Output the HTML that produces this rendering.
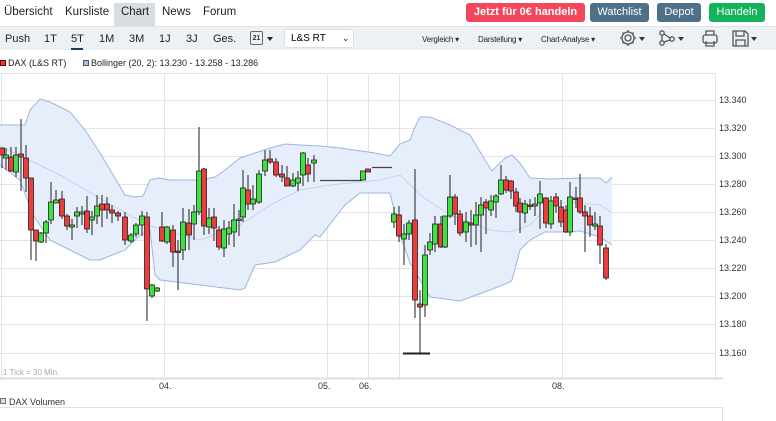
<!DOCTYPE html>
<html><head><meta charset="utf-8">
<style>
*{margin:0;padding:0;box-sizing:border-box}
body{width:776px;height:421px;overflow:hidden;background:#fff;font-family:"Liberation Sans",sans-serif;position:relative}
.nav{position:absolute;left:0;top:0;width:776px;height:26px;background:#fff}
.nav span{position:absolute;top:6px;font-size:11.5px;color:#222}
.tab{position:absolute;left:114px;top:3px;width:41px;height:23px;background:#d5dde3}
.btn{position:absolute;top:3px;height:19px;border-radius:3px;color:#fff;font-size:11px;text-align:center;line-height:19px}
.tb{position:absolute;left:0;top:26px;width:776px;height:24px;background:#eef1f4;border-top:1px solid #dde3e8}
.tb span{position:absolute;top:6px;font-size:11px;color:#222}
.sm{font-size:8px!important;top:8px!important;letter-spacing:-.2px}
.leg{position:absolute;top:58px;font-size:9px;color:#222}
</style></head><body>
<div class="nav">
<div class="tab"></div>
<span style="left:4px">Übersicht</span>
<span style="left:65px">Kursliste</span>
<span style="left:121px">Chart</span>
<span style="left:162px">News</span>
<span style="left:203px">Forum</span>
<div class="btn" style="left:466px;width:119px;background:#f2475d;font-weight:bold">Jetzt für 0€ handeln</div>
<div class="btn" style="left:590px;width:59px;background:#4e7089">Watchlist</div>
<div class="btn" style="left:657px;width:44px;background:#4e7089">Depot</div>
<div class="btn" style="left:709px;width:56px;background:#12b35b">Handeln</div>
</div>
<div class="tb">
<span style="left:5px">Push</span>
<span style="left:44px">1T</span>
<span style="left:71px">5T</span>
<div style="position:absolute;left:71px;top:21px;width:12px;height:2px;background:#1d3c55"></div>
<span style="left:99px">1M</span>
<span style="left:129px">3M</span>
<span style="left:159px">1J</span>
<span style="left:186px">3J</span>
<span style="left:213px">Ges.</span>
<div style="position:absolute;left:250px;top:4px;width:13px;height:14px;border:1px solid #666;border-radius:2px;font-size:7px;font-weight:bold;text-align:center;line-height:13px;color:#333">21</div>
<div style="position:absolute;left:267px;top:10px;border:3px solid transparent;border-top:4px solid #222"></div>
<div style="position:absolute;left:284px;top:2px;width:70px;height:19px;background:#fff;border:1px solid #dde;border-radius:3px;font-size:10px;line-height:17px;padding-left:6px">L&amp;S RT<span style="position:absolute;left:57px;top:0;font-size:9px">⌄</span></div>
<span class="sm" style="left:422px">Vergleich ▾</span>
<span class="sm" style="left:478px">Darstellung ▾</span>
<span class="sm" style="left:541px">Chart-Analyse ▾</span>
<svg style="position:absolute;left:620px;top:1px" width="156" height="22" viewBox="0 0 156 22">
<g fill="none" stroke="#555" stroke-width="1.3">
<circle cx="8" cy="10" r="3"/><path d="M8 2v2M8 16v2M0 10h2M14 10h2M2.5 4.5l1.5 1.5M12 14l1.5 1.5M2.5 15.5l1.5-1.5M12 6l1.5-1.5"/><circle cx="8" cy="10" r="6"/>
<circle cx="42" cy="5" r="2.2"/><circle cx="42" cy="15" r="2.2"/><circle cx="52" cy="11" r="2.2"/><path d="M42 7v6M44 14l6-2M44 6l6 4"/>
<rect x="83" y="7" width="14" height="8" rx="2"/><path d="M86 7V3h8v4M86 13v5h8v-5"/>
<path d="M113 3h12l3 3v12h-15z"/><path d="M116 3v5h8V3M116 18v-6h9v6"/>
</g>
<path d="M19 9h6l-3 4zM58 9h6l-3 4zM131 9h6l-3 4z" fill="#333"/>
</svg>
</div>
<div class="leg" style="left:0"><span style="display:inline-block;width:6px;height:6px;background:#e33;border:1px solid #600;margin-right:2px"></span>DAX (L&amp;S RT)</div>
<div class="leg" style="left:83px"><span style="display:inline-block;width:6px;height:6px;background:#a9c1e6;border:1px solid #456;margin-right:2px"></span>Bollinger (20, 2): 13.230 - 13.258 - 13.286</div>

<svg style="position:absolute;left:0;top:0" width="776" height="421" viewBox="0 0 776 421">
<g stroke="#e3e3e3" stroke-width="1" fill="none">
<path d="M0 73.5H716M0 100.5H716M0 128.5H716M0 156.5H716M0 184.5H716M0 212.5H716M0 240.5H716M0 268.5H716M0 296.5H716M0 324.5H716M0 353.5H716"/>
<path d="M1.5 73V378M164.5 73V378M327.5 73V378M368.5 73V378M399.5 73V378M562.5 73V378M715.5 73V378"/>
<path d="M0 378.5H723" stroke="#ddd" stroke-width="2"/>
<path d="M0 407.5H723M722.5 407V421" stroke="#e0e0e0"/>
</g>
<path d="M0 125L25 125L30 110L40 99L50 102L70 112L85 130L100 153L115 178L125 195L135 197L143 196L150 180L158 178L170 180L200 180L215 177L225 170L240 158L258 152L270 148L285 144L300 145L320 146L340 148L375 153L390 156L400 144L410 140L415 127L420 117L430 117L450 125L470 135L485 160L492 171L505 158L512 155L520 163L530 178L550 179L580 178L600 178L606 183L612 177 L612 245L600 237L580 231L560 232L545 232L530 240L520 250L512 280L510 282L490 290L460 301L430 297L410 263L400 235L390 193L360 193L345 205L320 237L315 235L300 250L275 262L255 265L245 288L240 290L200 285L160 280L155 275L150 230L140 235L125 250L100 260L90 260L60 245L50 240L33 215L20 180L0 165Z" fill="#e6eefb" stroke="none"/>
<g fill="none" stroke="#9db5e0" stroke-width="1">
<path d="M0 125L25 125L30 110L40 99L50 102L70 112L85 130L100 153L115 178L125 195L135 197L143 196L150 180L158 178L170 180L200 180L215 177L225 170L240 158L258 152L270 148L285 144L300 145L320 146L340 148L375 153L390 156L400 144L410 140L415 127L420 117L430 117L450 125L470 135L485 160L492 171L505 158L512 155L520 163L530 178L550 179L580 178L600 178L606 183L612 177"/>
<path d="M0 165L20 180L33 215L50 240L60 245L90 260L100 260L125 250L140 235L150 230L155 275L160 280L200 285L240 290L245 288L255 265L275 262L300 250L315 235L320 237L345 205L360 193L390 193L400 235L410 263L430 297L460 301L490 290L510 282L512 280L520 250L530 240L545 232L560 232L580 231L600 237L612 245"/>
<path d="M0 146L60 175L120 210L150 226L200 240L240 225L270 205L300 190L330 185L380 180L400 175L420 195L450 215L490 230L510 232L530 225L550 205L570 202L600 205L612 213" stroke="#c3d3ef"/>
</g>
<g stroke="#444" stroke-width="1.2">
<path d="M2 148V168M6 148V170M11 147V172M16 147V177M21 119V191M26 145V192M31 178V260M36 230V261M41 232V243M46 220V243M51 182V224M56 190V203M62 191V219M67 214V230M72 219V240M77 207V228M82 206V225M87 196V233M92 211V235M97 195V224M102 195V227M107 197V219M112 205V223M118 211V221M125 212V245M131 233V243M136 223V237M142 211V236M147 212V321M152 284V298M157 287V292M162 212V242M167 226V244M173 225V267M178 240V290M183 208V260M189 209V250M194 205V240M199 127V215M204 168V235M209 208V234M214 208V241M219 226V250M224 220V257M229 221V245M234 204V247M239 210V236M243 170V222M248 175V210M253 185V210M259 170V204M265 150V176M270 150V164M276 158V177M282 165V182M287 166V182M293 173V187M298 171V191M303 152V186M308 158V182M314 155V182"/>
<path d="M394 207V228M399 206V242M404 224V265M409 220V240M415 169V318M420 290V354M425 245V317M430 233V255M435 216V252M441 216V248M445 216V248M450 175V218M455 194V225M460 210V236M466 212V242M471 210V247M476 202V245M481 197V252M486 199V234M491 195V216M496 194V218M501 165V195M506 176V193M511 180V199M516 188V212M520 198V233M525 200V223M530 199V210M535 197V216M540 181V229M546 197V228M551 196V229M556 193V213M561 200V227M566 205V233M570 182V236M576 187V208M580 174V214M585 205V252M590 207V237M595 212V230M600 216V264M606 244V280"/>
<path d="M320 180.5H362M372 167.5H392" />
<path d="M403 353.5H430" stroke="#222" stroke-width="2"/>
</g>
<g stroke="#222" stroke-width="0.8">
<g fill="#ef3b3b">
<rect x="-0.5" y="148" width="5" height="7"/><rect x="8.5" y="157" width="5" height="14"/><rect x="18.5" y="154" width="5" height="3"/><rect x="23.5" y="158" width="5" height="20"/><rect x="28.5" y="178" width="5" height="52"/><rect x="33.5" y="230" width="5" height="11"/><rect x="59.5" y="199" width="5" height="17"/><rect x="64.5" y="216" width="5" height="10"/><rect x="84.5" y="211" width="5" height="18"/><rect x="99.5" y="204" width="5" height="6"/><rect x="104.5" y="204" width="5" height="6"/><rect x="109.5" y="210" width="5" height="3"/><rect x="115.5" y="213" width="5" height="3"/><rect x="122.5" y="217" width="5" height="23"/><rect x="144.5" y="217" width="5" height="72"/><rect x="159.5" y="227" width="5" height="14"/><rect x="170.5" y="230" width="5" height="22"/><rect x="175.5" y="251" width="5" height="1.5"/><rect x="186.5" y="223" width="5" height="12"/><rect x="201.5" y="169" width="5" height="57"/><rect x="211.5" y="217" width="5" height="11"/><rect x="216.5" y="230" width="5" height="17"/><rect x="245.5" y="190" width="5" height="14"/><rect x="267.5" y="159" width="5" height="3"/><rect x="273.5" y="162" width="5" height="13"/><rect x="279.5" y="174" width="5" height="3"/><rect x="284.5" y="178" width="5" height="8"/><rect x="305.5" y="165" width="5" height="9"/><rect x="365.5" y="169" width="5" height="3"/>
<rect x="396.5" y="215" width="5" height="21"/><rect x="412.5" y="220" width="5" height="80"/><rect x="417.5" y="304" width="5" height="3"/><rect x="438.5" y="224" width="5" height="23"/><rect x="452.5" y="197" width="5" height="17"/><rect x="457.5" y="214" width="5" height="19"/><rect x="468.5" y="223" width="5" height="2"/><rect x="483.5" y="202" width="5" height="6"/><rect x="503.5" y="180" width="5" height="10"/><rect x="508.5" y="181" width="5" height="10"/><rect x="513.5" y="192" width="5" height="14"/><rect x="517.5" y="203" width="5" height="9"/><rect x="527.5" y="205" width="5" height="1.5"/><rect x="543.5" y="198" width="5" height="25"/><rect x="553.5" y="197" width="5" height="9"/><rect x="558.5" y="207" width="5" height="15"/><rect x="563.5" y="210" width="5" height="22"/><rect x="573.5" y="198" width="5" height="1.5"/><rect x="577.5" y="198" width="5" height="14"/><rect x="582.5" y="212" width="5" height="4"/><rect x="587.5" y="216" width="5" height="9"/><rect x="597.5" y="226" width="5" height="19"/><rect x="603.5" y="248" width="5" height="30"/>
</g>
<g fill="#3ee23e">
<rect x="3.5" y="155" width="5" height="3"/><rect x="13.5" y="155" width="5" height="17"/><rect x="38.5" y="233" width="5" height="9"/><rect x="43.5" y="222" width="5" height="11"/><rect x="48.5" y="202" width="5" height="18"/><rect x="53.5" y="200" width="5" height="3"/><rect x="69.5" y="225" width="5" height="2"/><rect x="74.5" y="212" width="5" height="4"/><rect x="79.5" y="212" width="5" height="2"/><rect x="89.5" y="217" width="5" height="3"/><rect x="94.5" y="206" width="5" height="10"/><rect x="128.5" y="235" width="5" height="6"/><rect x="133.5" y="225" width="5" height="9"/><rect x="139.5" y="216" width="5" height="9"/><rect x="149.5" y="285" width="5" height="11"/><rect x="154.5" y="288" width="5" height="3"/><rect x="164.5" y="227" width="5" height="15"/><rect x="180.5" y="222" width="5" height="28"/><rect x="191.5" y="212" width="5" height="12"/><rect x="196.5" y="171" width="5" height="41"/><rect x="206.5" y="218" width="5" height="9"/><rect x="221.5" y="229" width="5" height="19"/><rect x="226.5" y="228" width="5" height="6"/><rect x="231.5" y="220" width="5" height="12"/><rect x="236.5" y="219" width="5" height="1.5"/><rect x="240.5" y="188" width="5" height="29"/><rect x="250.5" y="199" width="5" height="5"/><rect x="256.5" y="174" width="5" height="28"/><rect x="262.5" y="160" width="5" height="11"/><rect x="290.5" y="180" width="5" height="6"/><rect x="295.5" y="178" width="5" height="5"/><rect x="300.5" y="153" width="5" height="22"/><rect x="311.5" y="160" width="5" height="3"/><rect x="360.5" y="171" width="5" height="9"/>
<rect x="391.5" y="214" width="5" height="8"/><rect x="401.5" y="234" width="5" height="5"/><rect x="406.5" y="223" width="5" height="11"/><rect x="422.5" y="255" width="5" height="50"/><rect x="427.5" y="242" width="5" height="8"/><rect x="432.5" y="224" width="5" height="20"/><rect x="442.5" y="216" width="5" height="31"/><rect x="447.5" y="197" width="5" height="19"/><rect x="463.5" y="222" width="5" height="10"/><rect x="473.5" y="215" width="5" height="10"/><rect x="478.5" y="205" width="5" height="10"/><rect x="488.5" y="201" width="5" height="9"/><rect x="493.5" y="196" width="5" height="6"/><rect x="498.5" y="180" width="5" height="14"/><rect x="522.5" y="204" width="5" height="9"/><rect x="532.5" y="204" width="5" height="2"/><rect x="537.5" y="194" width="5" height="9"/><rect x="548.5" y="201" width="5" height="23"/><rect x="567.5" y="197" width="5" height="35"/><rect x="592.5" y="224" width="5" height="2"/>
</g>
</g>
<g font-family="Liberation Sans,sans-serif" font-size="9" fill="#333">
<text x="719" y="103">13.340</text><text x="719" y="131">13.320</text><text x="719" y="159">13.300</text><text x="719" y="187">13.280</text><text x="719" y="215">13.260</text><text x="719" y="243">13.240</text><text x="719" y="271">13.220</text><text x="719" y="299">13.200</text><text x="719" y="327">13.180</text><text x="719" y="356">13.160</text>
<text x="159" y="389">04.</text><text x="318" y="389">05.</text><text x="359" y="389">06.</text><text x="552" y="389">08.</text>
<text x="3" y="375" font-size="8" fill="#aaa">1 Tick = 30 Min.</text>
<text x="9" y="405">DAX Volumen</text>
</g>
<rect x="0.5" y="398.5" width="5" height="5" fill="#ddd" stroke="#555" stroke-width="0.8"/>
</svg>
</body></html>
